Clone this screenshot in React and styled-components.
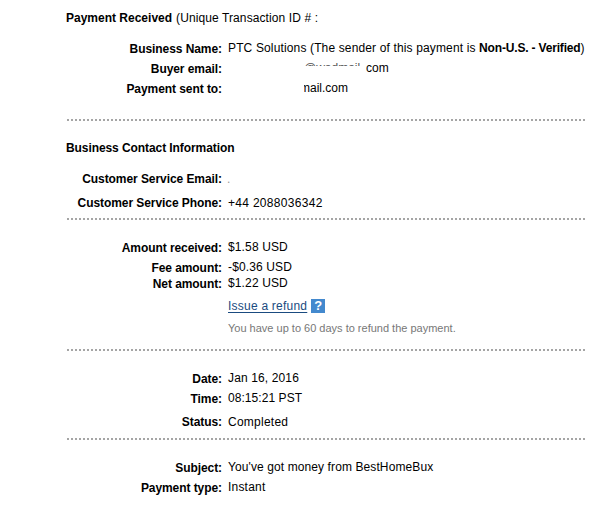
import React from 'react';
import styled, { createGlobalStyle } from 'styled-components';

const GlobalStyle = createGlobalStyle`
  body {
    margin: 0;
    background: #fff;
    color: #000;
    font: 12px/16px "Liberation Sans", Arial, sans-serif;
  }
`

const Page = styled.main`
  width: 596px;
  height: 520px;
  padding: 10px 11px 0 66px;
  box-sizing: border-box;
  overflow: hidden;
`

const Section = styled.section`
  display: flex;
  flex-direction: column;
  height: ${p => p.$height}px;
`

const Heading = styled.div`
  display: flex;
  gap: 4px;
  height: 16px;
  margin-top: ${p => p.$gap || 0}px;
  white-space: pre;
`

const Title = styled.b`
  letter-spacing: ${p => p.$track || 0}px;
`

const Row = styled.div`
  display: grid;
  grid-template-columns: 156px 1fr;
  column-gap: 6px;
  height: 16px;
  margin-top: ${p => p.$gap || 0}px;
  white-space: pre;
`

const Label = styled.b`
  text-align: right;
  padding-top: ${p => (p.$level ? 0 : 1)}px;
  letter-spacing: -0.07px;
`

const Value = styled.span`
  letter-spacing: ${p => p.$track || 0}px;
`

const Strong = styled.b`
  letter-spacing: -0.17px;
`

const Dots = styled.div`
  height: 2px;
  background: repeating-linear-gradient(90deg, #fff 0 1px, #a5a5a5 1px 3px, #fff 3px 4px);
`

const Email = styled.span`
  display: flex;
  padding-left: 76px;
`

const Covered = styled.span`
  height: 6px;
  width: 62px;
  color: #555;
  overflow: hidden;
`

const Trimmed = styled.span`
  display: flex;
  justify-content: flex-end;
  width: ${p => p.$width}px;
  overflow: hidden;
`

const Faint = styled.span`
  color: #999;
  margin-left: -1px;
`

const Refund = styled.span`
  display: flex;
  gap: 4px;
`

const RefundLink = styled.a`
  color: #1a4b80;
  text-decoration: underline;
  text-underline-offset: 2px;
  letter-spacing: 0.23px;
`

const Help = styled.b`
  width: 14px;
  height: 14px;
  margin-top: 1px;
  background: #4389ce;
  color: #fff;
  font-size: 13px;
  line-height: 14px;
  text-align: center;
`

const Note = styled.span`
  color: #777;
  font-size: 11px;
`

function Item({ label, gap, track, level, children }) {
  return (
    <Row $gap={gap}>
      <Label $level={level}>{label}</Label>
      <Value $track={track}>{children}</Value>
    </Row>
  )
}

const App = () => (
  <Page>
    <GlobalStyle />
    <Section $height={109}>
      <Heading>
        <Title>Payment Received</Title>
        <Value $track={0.1}>(Unique Transaction ID #</Value>
        <Trimmed $width={3}>:</Trimmed>
      </Heading>
      <Item label="Business Name:" gap={14} track={0.14}>
        PTC Solutions (The sender of this payment is <Strong>Non-U.S. - Verified</Strong>)
      </Item>
      <Item label="Buyer email:" gap={4}>
        <Email>
          <Covered>@wadmail.</Covered>
          com
        </Email>
      </Item>
      <Item label="Payment sent to:" gap={4}>
        <Email>
          <Trimmed $width={44}>mail.com</Trimmed>
        </Email>
      </Item>
    </Section>
    <Dots />
    <Section $height={97}>
      <Heading $gap={19}>
        <Title $track={-0.08}>Business Contact Information</Title>
      </Heading>
      <Item label="Customer Service Email:" gap={15} level><Faint>.</Faint></Item>
      <Item label="Customer Service Phone:" gap={8} track={0.3} level>+44 2088036342</Item>
    </Section>
    <Dots />
    <Section $height={129}>
      <Item label="Amount received:" gap={19} track={0.13}>$1.58 USD</Item>
      <Item label="Fee amount:" gap={4} track={0.13}>-$0.36 USD</Item>
      <Item label="Net amount:" track={0.13}>$1.22 USD</Item>
      <Item gap={7}>
        <Refund>
          <RefundLink>Issue a refund</RefundLink>
          <Help>?</Help>
        </Refund>
      </Item>
      <Item gap={6}><Note>You have up to 60 days to refund the payment.</Note></Item>
    </Section>
    <Dots />
    <Section $height={87}>
      <Item label="Date:" gap={19} track={0.13}>Jan 16, 2016</Item>
      <Item label="Time:" gap={4} track={0.06}>08:15:21 PST</Item>
      <Item label="Status:" gap={8} track={0.25} level>Completed</Item>
    </Section>
    <Dots />
    <Section $height={70}>
      <Item label="Subject:" gap={19} track={0.1}>You've got money from BestHomeBux</Item>
      <Item label="Payment type:" gap={4} track={0.2}>Instant</Item>
    </Section>
  </Page>
)

export default App
